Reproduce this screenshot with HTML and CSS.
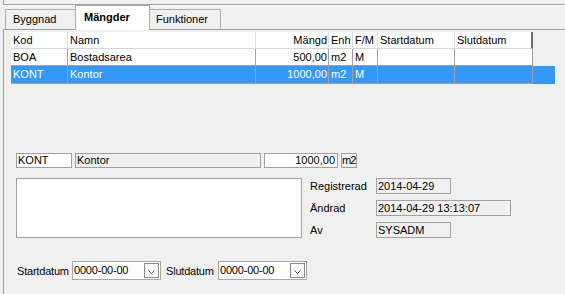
FILE: index.html
```html
<!DOCTYPE html>
<html lang="sv">
  <head>
    <meta charset="UTF-8" />
    <title>Mängder</title>
    <link rel="stylesheet" href="styles.css">
  </head>
  <body>
    <div class="top-strip"></div>

    <!-- Flikar -->
    <div class="tabs">
      <div class="tab">Byggnad</div>
      <div class="tab active">Mängder</div>
      <div class="tab">Funktioner</div>
    </div>

    <div class="panel">
      <!-- Lista med mängder -->
      <div class="grid">
        <div class="grid-row head">
          <div class="cell">Kod</div>
          <div class="cell">Namn</div>
          <div class="cell num">Mängd</div>
          <div class="cell">Enh</div>
          <div class="cell">F/M</div>
          <div class="cell">Startdatum</div>
          <div class="cell last">Slutdatum</div>
          <div class="filler"></div>
        </div>
        <div class="grid-row">
          <div class="cell">BOA</div>
          <div class="cell">Bostadsarea</div>
          <div class="cell num">500,00</div>
          <div class="cell">m2</div>
          <div class="cell">M</div>
          <div class="cell"></div>
          <div class="cell"></div>
          <div class="filler"></div>
        </div>
        <div class="grid-row selected">
          <div class="cell">KONT</div>
          <div class="cell">Kontor</div>
          <div class="cell num">1000,00</div>
          <div class="cell">m2</div>
          <div class="cell">M</div>
          <div class="cell"></div>
          <div class="cell"></div>
          <div class="filler"></div>
        </div>
      </div>

      <!-- Detaljer -->
      <div class="form">
        <div class="field-row">
          <div class="box code">KONT</div>
          <div class="box readonly name">Kontor</div>
          <div class="box amount">1000,00</div>
          <div class="box readonly unit">m2</div>
        </div>

        <div class="info-row">
          <div class="box note"></div>
          <div class="meta">
            <span class="meta-label">Registrerad</span>
            <div class="box readonly short">2014-04-29</div>
            <span class="meta-label">Ändrad</span>
            <div class="box readonly long">2014-04-29 13:13:07</div>
            <span class="meta-label">Av</span>
            <div class="box readonly short">SYSADM</div>
          </div>
        </div>

        <div class="date-row">
          <span class="date-label start">Startdatum</span>
          <div class="box date">
            <span>0000-00-00</span>
            <span class="drop">
              <svg width="7" height="4" viewBox="0 0 7 4"><polyline points="0.5,0.5 3.5,3.5 6.5,0.5" fill="none" stroke="#555" stroke-width="1"/></svg>
            </span>
          </div>
          <span class="date-label end">Slutdatum</span>
          <div class="box date">
            <span>0000-00-00</span>
            <span class="drop">
              <svg width="7" height="4" viewBox="0 0 7 4"><polyline points="0.5,0.5 3.5,3.5 6.5,0.5" fill="none" stroke="#555" stroke-width="1"/></svg>
            </span>
          </div>
        </div>
      </div>
    </div>
  </body>
</html>
```

FILE: styles.css
```css
/* Allmänt */
body {
  margin: 0;
  background: #f0f0f0;
  font-family: "Liberation Sans", Arial, sans-serif;
  font-size: 11px;
  color: #000;
  overflow: hidden;
}

.top-strip {
  margin-left: 3px;
  height: 4px;
  border-left: 1px solid #a0a0a0;
  border-bottom: 1px solid #a0a0a0;
  box-shadow: 0 1px 0 #fff;
}

/* Flikar */
.tabs {
  display: flex;
  align-items: flex-end;
  height: 24px;
  margin-left: 5px;
}

.tab {
  box-sizing: border-box;
  height: 20px;
  width: 70px;
  padding: 3px 0 0 7px;
  border: 1px solid #adadad;
  border-bottom: none;
  background: #f0f0f0;
}

.tab.active {
  width: 75px;
  height: 25px;
  margin-bottom: -1px;
  padding: 5px 0 0 8px;
  background: #fff;
  font-weight: bold;
  border-left: 1px solid #adadad;
  border-right: 1px solid #adadad;
  position: relative;
  z-index: 1;
}

.tab:last-child {
  width: 71px;
  border-left: none;
  padding-left: 6px;
}

.tab:first-child {
  border-right: none;
}

.panel {
  margin-left: 3px;
  border-top: 1px solid #a0a0a0;
  border-left: 1px solid #a0a0a0;
  height: 264px;
}

/* Lista */
.grid {
  margin: 2px 0 0 7px;
  width: 544px;
  height: 114px;
}

.grid-row {
  display: grid;
  grid-template-columns: 57px 188px 73px 24px 25px 77px 78px 22px;
  height: 17px;
}

.cell {
  box-sizing: border-box;
  padding: 2px 0 0 2px;
  border-right: 1px solid #a0a0a0;
  border-bottom: 1px solid #a0a0a0;
  background: #fff;
  white-space: nowrap;
  overflow: hidden;
}

.cell.num {
  text-align: right;
  padding: 2px 1px 0 0;
}

.head .cell {
  border-right-color: #e0e0e0;
  border-bottom: 1px solid #d5d5d5;
}

.head .cell.last {
  border-right: 2px solid #707070;
}

.selected {
  height: 18px;
}

.selected .cell,
.selected .filler {
  background: #3399ff;
  color: #fff;
}

/* Detaljer */
.form {
  padding: 7px 0 0 12px;
}

.box {
  box-sizing: border-box;
  height: 15px;
  border: 1px solid #a0a0a0;
  background: #fff;
  padding: 0 0 0 1px;
  line-height: 13px;
  white-space: nowrap;
}

.box.readonly {
  background: #f0f0f0;
}

.field-row {
  display: flex;
  gap: 3px;
}

.code { width: 56px; }
.name { width: 186px; }
.amount { width: 74px; text-align: right; padding-right: 2px; }
.box.unit { width: 16px; padding: 0; letter-spacing: -0.8px; overflow: hidden; }

.info-row {
  display: flex;
  align-items: flex-start;
  margin-top: 10px;
}

.box.note {
  width: 286px;
  height: 60px;
}

.meta {
  display: grid;
  grid-template-columns: 67px auto;
  align-items: center;
  row-gap: 6px;
  margin-left: 7px;
}

.meta .box {
  height: 16px;
  line-height: 14px;
}

.meta-label { padding-left: 1px; }

.short { width: 75px; }
.long { width: 135px; }

.date-row {
  display: flex;
  align-items: center;
  margin-top: 23px;
  padding-left: 1px;
}

.date-label {
  letter-spacing: -0.2px;
  white-space: nowrap;
}

.date-label.start { width: 55px; }
.date-label.end { width: 52px; }

.box.date {
  display: flex;
  justify-content: space-between;
  width: 89px;
  height: 19px;
  line-height: 17px;
  padding-right: 1px;
  margin-right: 5px;
  border-color: #a8a8a8;
  letter-spacing: -0.2px;
}

.drop {
  box-sizing: border-box;
  width: 15px;
  height: 15px;
  margin-top: 1px;
  border: 1px solid #8a8a8a;
  background: #fff;
  display: flex;
  align-items: flex-end;
  justify-content: center;
  padding-bottom: 3px;
}

.drop svg { display: block; }
```
